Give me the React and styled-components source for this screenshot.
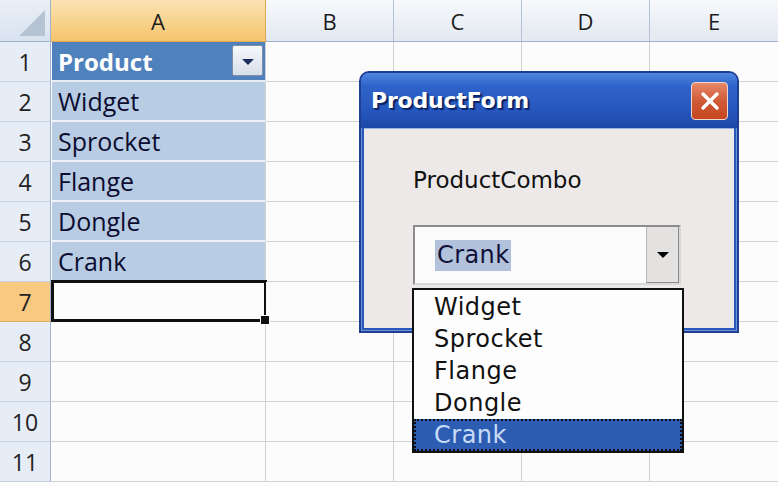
import React from 'react';
import styled, { createGlobalStyle, css } from 'styled-components';

const GlobalStyle = createGlobalStyle`
  html, body {
    margin: 0;
    padding: 0;
    background: #ffffff;
  }
`;

const Sheet = styled.div`
  position: relative;
  width: 778px;
  height: 486px;
  overflow: hidden;
  background: #fcfcfc;
  font-family: "Open Sans", "Liberation Sans", sans-serif;
`;

const Grid = styled.div`
  display: grid;
  grid-template-columns: 51px 215px 128px 128px 128px 129px;
  grid-template-rows: 42px;
  grid-auto-rows: 40px;
`;

const Corner = styled.div`
  position: relative;
  box-sizing: border-box;
  background: linear-gradient(#e9eff7, #d9e3f0);
  border-right: 1px solid #9fb3cc;
  border-bottom: 1px solid #9fb3cc;

  &::after {
    content: '';
    position: absolute;
    right: 5px;
    bottom: 5px;
    width: 0;
    height: 0;
    border-left: 26px solid transparent;
    border-bottom: 26px solid #b6c3d3;
  }
`;

const ColHeader = styled.div`
  box-sizing: border-box;
  display: flex;
  align-items: center;
  justify-content: center;
  font-size: 22px;
  color: #1c1c1c;
  background: linear-gradient(#f7f9fc, #e2e8f1);
  border-right: 1px solid #b4c2d3;
  border-bottom: 1px solid #9fb3cc;

  ${p => p.$active && css`
    background: linear-gradient(#fbe3b3, #f5c46c);
    border-right-color: #e0a850;
    border-bottom-color: #e0a850;
  `}
`;

const RowHeader = styled.div`
  box-sizing: border-box;
  display: flex;
  align-items: center;
  justify-content: center;
  font-size: 23px;
  color: #222;
  background: #e6edf6;
  border-right: 1px solid #9fb3cc;
  border-bottom: 1px solid #c5d1e0;

  ${p => p.$active && css`
    background: #f8c981;
    border-bottom-color: #e3ab5c;
  `}
`;

const Cell = styled.div`
  position: relative;
  box-sizing: border-box;
  display: flex;
  align-items: center;
  padding-left: 6px;
  font-size: 25px;
  color: #10103a;
  background: #fcfcfc;
  border-right: 1px solid #d2d2d2;
  border-bottom: 1px solid #d2d2d2;

  ${p => p.$kind === 'head' && css`
    background: #4f81bd;
    color: #ffffff;
    font-weight: 700;
    font-size: 24px;
    border-bottom: 2px solid #e9eef5;
    margin-left: 1px;
  `}

  ${p => p.$kind === 'band' && css`
    background: #b8cce4;
    color: #0c0c30;
    border-bottom: 2px solid #eef2f8;
    margin-left: 1px;
  `}

  ${p => p.$kind === 'active' && css`
    &::after {
      content: '';
      position: absolute;
      left: 0px;
      top: -2px;
      right: -2px;
      bottom: -1px;
      border: 3px solid #101010;
    }
    &::before {
      content: '';
      position: absolute;
      right: -5px;
      bottom: -4px;
      width: 8px;
      height: 8px;
      background: #101010;
      border: 1px solid #fff;
      z-index: 1;
    }
  `}
`;

const FilterButton = styled.div`
  position: absolute;
  right: 2px;
  top: 3px;
  width: 31px;
  height: 31px;
  box-sizing: border-box;
  display: flex;
  align-items: center;
  justify-content: center;
  background: linear-gradient(#f6f8fb, #d7dfea);
  border: 1px solid #7f8ea4;
  border-radius: 2px;

  &::after {
    content: '';
    border-left: 6px solid transparent;
    border-right: 6px solid transparent;
    border-top: 6px solid #1c2c5a;
    margin-top: 2px;
  }
`;

const Dialog = styled.div`
  position: absolute;
  left: 359px;
  top: 71px;
  width: 380px;
  height: 262px;
  box-sizing: border-box;
  display: flex;
  flex-direction: column;
  border: 2px solid #1e3f94;
  border-radius: 10px 10px 0 0;
  background: #2a58b8;
  box-shadow: inset 0 0 0 1px #6e93d8;
  font-family: "DejaVu Sans", Verdana, sans-serif;
`;

const TitleBar = styled.div`
  height: 55px;
  flex: none;
  display: flex;
  align-items: center;
  justify-content: space-between;
  padding: 0 9px 0 10px;
  border-radius: 8px 8px 0 0;
  background: linear-gradient(#4d86e0 0%, #2f62c8 25%, #2556bd 70%, #1d47a6 100%);
`;

const Title = styled.div`
  font-size: 22px;
  font-weight: 700;
  color: #ffffff;
  letter-spacing: -0.2px;
  text-shadow: 1px 1px 0 #0b2366, 2px 2px 1px #0b2366;
`;

const CloseButton = styled.div`
  width: 37px;
  height: 38px;
  box-sizing: border-box;
  display: flex;
  align-items: center;
  justify-content: center;
  border: 1px solid #f0d6cc;
  border-radius: 4px;
  background: linear-gradient(#e7896a, #d05a36 50%, #c3461f);
`;

const Body = styled.div`
  flex: 1;
  margin: 0 3px 3px 3px;
  padding: 36px 0 0 49px;
  background: #ece9e8;
  border-top: 1px solid #9bb3df;
`;

const Label = styled.div`
  font-size: 23px;
  color: #111;
  line-height: 30px;
`;

const Combo = styled.div`
  position: relative;
  margin-top: 30px;
  width: 268px;
  height: 60px;
  box-sizing: border-box;
  display: flex;
  align-items: center;
  background: #fbfbfb;
  border: 2px solid #8c8c8c;
  border-right-color: #d8d8d8;
  border-bottom-color: #d8d8d8;
`;

const ComboValue = styled.span`
  margin-left: 20px;
  padding: 0 2px;
  font-size: 24px;
  line-height: 31px;
  letter-spacing: 0.4px;
  color: #10103a;
  background: #b2c2da;
`;

const ComboButton = styled.div`
  margin-left: auto;
  width: 33px;
  height: 100%;
  box-sizing: border-box;
  display: flex;
  align-items: center;
  justify-content: center;
  background: #e4e2e0;
  border-left: 1px solid #b8b8b8;
  border-right: 1px solid #8a8a8a;
  border-bottom: 1px solid #8a8a8a;

  &::after {
    content: '';
    border-left: 6px solid transparent;
    border-right: 6px solid transparent;
    border-top: 6px solid #000;
  }
`;

const List = styled.div`
  position: absolute;
  left: -3px;
  top: 61px;
  width: 272px;
  box-sizing: border-box;
  padding-top: 1px;
  background: #fdfdfd;
  border: 2px solid #111;
  z-index: 2;
`;

const Item = styled.div`
  height: 32px;
  box-sizing: border-box;
  display: flex;
  align-items: center;
  padding-left: 20px;
  font-size: 24px;
  letter-spacing: 0.5px;
  color: #111;

  ${p => p.$selected && css`
    background: #2d5cb3;
    color: #c9dcf7;
    outline: 2px dotted #101010;
    outline-offset: -2px;
  `}
`;

const columns = ['A', 'B', 'C', 'D', 'E'];
const products = ['Widget', 'Sprocket', 'Flange', 'Dongle', 'Crank'];

const cellKind = (row) => {
  if (row === 1) return 'head';
  if (row >= 2 && row <= 6) return 'band';
  if (row === 7) return 'active';
  return undefined;
};

const App = () => {
  const rows = Array.from({ length: 11 }, (_, i) => i + 1);

  return (
    <Sheet>
      <GlobalStyle />
      <Grid>
        <Corner />
        {columns.map(c => (
          <ColHeader key={c} $active={c === 'A'}>{c}</ColHeader>
        ))}
        {rows.map(r => (
          <React.Fragment key={r}>
            <RowHeader $active={r === 7}>{r}</RowHeader>
            <Cell $kind={cellKind(r)}>
              {r === 1 && 'Product'}
              {r >= 2 && r <= 6 && products[r - 2]}
              {r === 1 && <FilterButton />}
            </Cell>
            {columns.slice(1).map(c => <Cell key={c} />)}
          </React.Fragment>
        ))}
      </Grid>

      <Dialog>
        <TitleBar>
          <Title>ProductForm</Title>
          <CloseButton>
            <svg width="22" height="22" viewBox="0 0 22 22">
              <path d="M4 4 L18 18 M18 4 L4 18" stroke="#ffffff" strokeWidth="3.4" strokeLinecap="round" />
            </svg>
          </CloseButton>
        </TitleBar>
        <Body>
          <Label>ProductCombo</Label>
          <Combo>
            <ComboValue>Crank</ComboValue>
            <ComboButton />
            <List>
              {products.map(p => (
                <Item key={p} $selected={p === 'Crank'}>{p}</Item>
              ))}
            </List>
          </Combo>
        </Body>
      </Dialog>
    </Sheet>
  );
};

export default App;
